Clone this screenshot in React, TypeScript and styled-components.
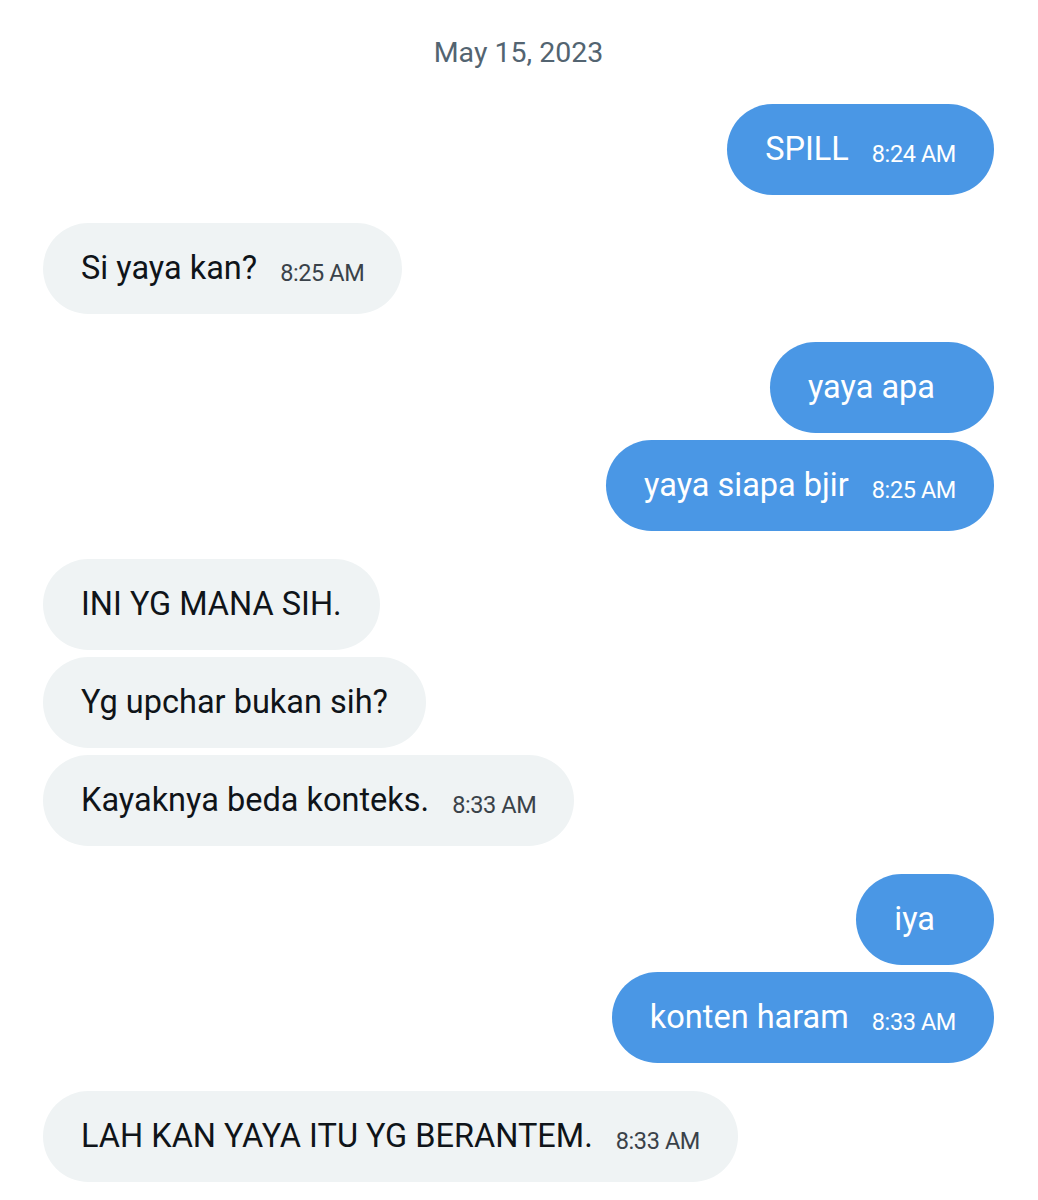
import React from "react";
import styled, { createGlobalStyle } from "styled-components";

const Global = createGlobalStyle`
  html, body { margin: 0; padding: 0; background: #ffffff; }
  body { font-family: Roboto, "Noto Sans", Arial, sans-serif; }
`;

const Page = styled.div`
  width: 1038px;
  min-height: 1200px;
  box-sizing: border-box;
  padding: 37px 44px 0 43px;
  display: flex;
  flex-direction: column;
`;

const DateLabel = styled.div`
  text-align: center;
  color: #536471;
  font-size: 28.5px;
  line-height: 32px;
  margin-bottom: 35px;
`;

const Group = styled.div<{ $mine?: boolean }>`
  display: flex;
  flex-direction: column;
  align-items: ${(p) => (p.$mine ? "flex-end" : "flex-start")};
  gap: 7px;
  margin-bottom: 28px;
`;

const Bubble = styled.div<{ $mine?: boolean; $wide?: boolean }>`
  height: 91px;
  box-sizing: border-box;
  padding: 0 ${(p) => (p.$wide ? "59px" : "38px")} 0 38px;
  border-radius: 46px;
  display: flex;
  align-items: baseline;
  gap: 23px;
  background: ${(p) => (p.$mine ? "#4A97E5" : "#EFF3F4")};
  color: ${(p) => (p.$mine ? "#ffffff" : "#0F1419")};
  line-height: 91px;
`;

const Text = styled.span`
  font-size: 32.5px;
`;

const Time = styled.span<{ $mine?: boolean }>`
  font-size: 23.5px;
  position: relative;
  top: 2px;
  color: ${(p) => (p.$mine ? "#ffffff" : "#3a4249")};
  letter-spacing: -0.4px;
`;

type Msg = { text: string; time?: string };
type G = { mine: boolean; msgs: Msg[] };

const groups: G[] = [
  { mine: true, msgs: [{ text: "SPILL", time: "8:24 AM" }] },
  { mine: false, msgs: [{ text: "Si yaya kan?", time: "8:25 AM" }] },
  { mine: true, msgs: [{ text: "yaya apa" }, { text: "yaya siapa bjir", time: "8:25 AM" }] },
  {
    mine: false,
    msgs: [
      { text: "INI YG MANA SIH." },
      { text: "Yg upchar bukan sih?" },
      { text: "Kayaknya beda konteks.", time: "8:33 AM" },
    ],
  },
  { mine: true, msgs: [{ text: "iya" }, { text: "konten haram", time: "8:33 AM" }] },
  { mine: false, msgs: [{ text: "LAH KAN YAYA ITU YG BERANTEM.", time: "8:33 AM" }] },
];

export default function App() {
  return (
    <>
      <Global />
      <Page>
        <DateLabel>May 15, 2023</DateLabel>
        {groups.map((g, i) => (
          <Group key={i} $mine={g.mine}>
            {g.msgs.map((m, j) => (
              <Bubble key={j} $mine={g.mine} $wide={g.mine && !m.time}>
                <Text>{m.text}</Text>
                {m.time && <Time $mine={g.mine}>{m.time}</Time>}
              </Bubble>
            ))}
          </Group>
        ))}
      </Page>
    </>
  );
}
